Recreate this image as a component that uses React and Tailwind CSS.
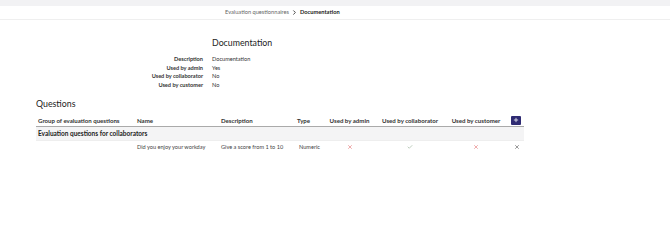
import { Plus, X, Check, ChevronRight } from 'lucide-react';

const question = {
  group: 'Evaluation questions for collaborators',
  name: 'Did you enjoy your workday',
  description: 'Give a score from 1 to 10',
  type: 'Numeric',
  admin: false,
  collaborator: true,
  customer: false,
};

const details = [
  ['Description', 'Documentation'],
  ['Used by admin', 'Yes'],
  ['Used by collaborator', 'No'],
  ['Used by customer', 'No'],
];

function Flag({ on }) {
  return on ? (
    <Check size={6} strokeWidth={2.2} className="inline-block text-[#8aa68a]" />
  ) : (
    <X size={6} strokeWidth={2.2} className="inline-block text-[#e06666]" />
  );
}

export default function App() {
  return (
    <div className="min-h-[242px] bg-white text-[#333] font-['Lato','Liberation_Sans',sans-serif]">
      {/* Top strip */}
      <div className="h-[6px] bg-[#f2f2f4]" />

      {/* Breadcrumb */}
      <div className="flex h-[14px] items-center border-b border-[#efefef] pl-[225px] text-[5.7px]">
        <span className="text-[#666]">Evaluation questionnaires</span>
        <ChevronRight size={7} strokeWidth={3} className="mx-[2px] text-[#333]" />
        <span className="font-bold text-[#222]">Documentation</span>
      </div>

      <div className="pl-[36px] pt-[16px]">
        <h1 className="ml-[176px] text-[8.8px] leading-[14px] text-[#222]">Documentation</h1>

        <dl className="mt-[5px] grid grid-cols-[167px_1fr] gap-x-[9px] text-[5.6px] leading-[8.7px]">
          {details.map(([label, value]) => (
            <div key={label} className="contents">
              <dt className="text-right font-bold text-[#333]">{label}</dt>
              <dd className="text-[#333]">{value}</dd>
            </div>
          ))}
        </dl>

        <h2 className="mt-[7px] text-[8.8px] leading-[14px] text-[#222]">Questions</h2>

        <table className="mt-[4px] w-[488px] table-fixed border-collapse text-[5.6px]">
          <colgroup>
            <col className="w-[99px]" />
            <col className="w-[84px]" />
            <col className="w-[76px]" />
            <col className="w-[29px]" />
            <col className="w-[51px]" />
            <col className="w-[70px]" />
            <col className="w-[62px]" />
            <col />
          </colgroup>
          <thead>
            <tr className="h-[12px] border-b border-[#aaa] text-[6.1px] text-[#333]">
              <th className="px-[2px] text-left font-bold">Group of evaluation questions</th>
              <th className="px-[2px] text-left font-bold">Name</th>
              <th className="px-[2px] text-left font-bold">Description</th>
              <th className="px-[2px] text-left font-bold">Type</th>
              <th className="text-center font-bold">Used by admin</th>
              <th className="text-center font-bold">Used by collaborator</th>
              <th className="text-center font-bold">Used by customer</th>
              <th className="text-center">
                <button className="inline-flex h-[9px] w-[10px] items-center justify-center rounded-[1px] bg-[#2e2a72] text-white">
                  <Plus size={6} strokeWidth={3} />
                </button>
              </th>
            </tr>
          </thead>
          <tbody>
            <tr className="h-[14px] border-b border-[#eee] bg-[#f4f4f5]">
              <td colSpan={8} className="px-[2px] text-[6.5px] font-bold text-[#222]">
                {question.group}
              </td>
            </tr>
            <tr className="h-[12px] text-[#444]">
              <td />
              <td className="px-[2px]">{question.name}</td>
              <td className="px-[2px]">{question.description}</td>
              <td className="px-[2px] pl-[4px]">{question.type}</td>
              <td className="text-center leading-none"><Flag on={question.admin} /></td>
              <td className="text-center leading-none"><Flag on={question.collaborator} /></td>
              <td className="text-center leading-none"><Flag on={question.customer} /></td>
              <td className="text-center leading-none">
                <X size={6} strokeWidth={2.2} className="ml-[2px] inline-block text-[#444]" />
              </td>
            </tr>
          </tbody>
        </table>
      </div>
    </div>
  );
}
